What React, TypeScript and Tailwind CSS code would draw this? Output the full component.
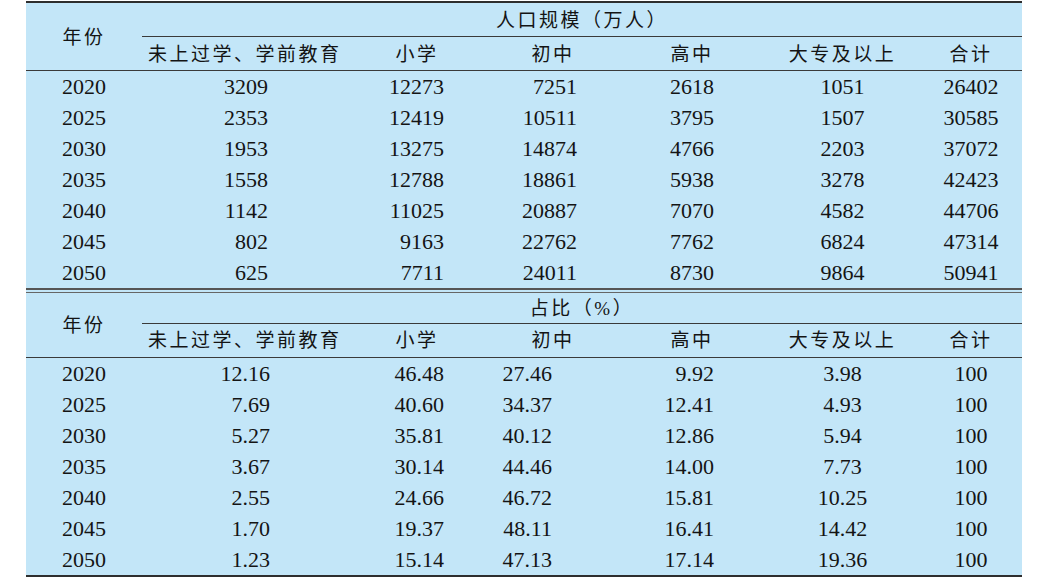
import React from "react";

type Cell = { pr: string; center?: boolean };

const popRows: [string, string[]][] = [
  ["2020", ["3209", "12273", "7251", "2618", "1051", "26402"]],
  ["2025", ["2353", "12419", "10511", "3795", "1507", "30585"]],
  ["2030", ["1953", "13275", "14874", "4766", "2203", "37072"]],
  ["2035", ["1558", "12788", "18861", "5938", "3278", "42423"]],
  ["2040", ["1142", "11025", "20887", "7070", "4582", "44706"]],
  ["2045", ["802", "9163", "22762", "7762", "6824", "47314"]],
  ["2050", ["625", "7711", "24011", "8730", "9864", "50941"]],
];

const shareRows: [string, string[]][] = [
  ["2020", ["12.16", "46.48", "27.46", "9.92", "3.98", "100"]],
  ["2025", ["7.69", "40.60", "34.37", "12.41", "4.93", "100"]],
  ["2030", ["5.27", "35.81", "40.12", "12.86", "5.94", "100"]],
  ["2035", ["3.67", "30.14", "44.46", "14.00", "7.73", "100"]],
  ["2040", ["2.55", "24.66", "46.72", "15.81", "10.25", "100"]],
  ["2045", ["1.70", "19.37", "48.11", "16.41", "14.42", "100"]],
  ["2050", ["1.23", "15.14", "47.13", "17.14", "19.36", "100"]],
];

// column alignment inside each grid column (right padding, LaTeX-style)
const popAlign: Cell[] = [
  { pr: "pr-[92px]" },
  { pr: "pr-[46px]" },
  { pr: "pr-[53px]" },
  { pr: "pr-[46px]" },
  { pr: "pr-0", center: true },
  { pr: "pr-[5px]", center: true },
];
const shareAlign: Cell[] = [
  { pr: "pr-[90px]" },
  { pr: "pr-[46px]" },
  { pr: "pr-[78px]" },
  { pr: "pr-[46px]" },
  { pr: "pr-0", center: true },
  { pr: "pr-[5px]", center: true },
];

const cjk = "font-['Liberation_Serif','Noto_Sans_CJK_SC',serif] text-[19px] tracking-[2.5px]";
const num = "font-['Liberation_Serif',serif] text-[22px]";

function HeaderCells({ pt }: { pt: string }) {
  return (
    <>
      <div className={`flex h-[34px] items-center justify-start border-b border-[#3a3a3a] pl-[6px] ${pt} ${cjk}`}>
        未上过学、学前教育
      </div>
      <div className={`flex h-[34px] items-center justify-center border-b border-[#3a3a3a] pr-[16px] ${pt} ${cjk}`}>小学</div>
      <div className={`flex h-[34px] items-center justify-center border-b border-[#3a3a3a] pr-[14px] ${pt} ${cjk}`}>初中</div>
      <div className={`flex h-[34px] items-center justify-center border-b border-[#3a3a3a] pr-[6px] ${pt} ${cjk}`}>高中</div>
      <div className={`flex h-[34px] items-center justify-center border-b border-[#3a3a3a] ${pt} ${cjk}`}>大专及以上</div>
      <div className={`flex h-[34px] items-center justify-center border-b border-[#3a3a3a] pr-[5px] ${pt} ${cjk}`}>合计</div>
    </>
  );
}

function Section({
  title,
  titleH,
  pt,
  rows,
  align,
}: {
  title: string;
  titleH: string;
  pt: string;
  rows: [string, string[]][];
  align: Cell[];
}) {
  return (
    <div className="grid grid-cols-[116px_218px_130px_140px_130px_165px_97px] text-[#141414]">
      <div className={`row-span-2 flex items-center justify-center border-b border-[#3a3a3a] ${pt} ${cjk}`}>年份</div>
      <div className={`col-span-6 flex ${titleH} items-center justify-center border-b border-[#3a3a3a] ${pt} ${cjk}`}>
        {title}
      </div>
      <HeaderCells pt={pt} />
      {rows.map(([year, vals]) => (
        <React.Fragment key={year}>
          <div className={`flex h-[31px] items-center justify-center ${num}`}>{year}</div>
          {vals.map((v, i) => (
            <div
              key={i}
              className={`flex h-[31px] items-center ${align[i].center ? "justify-center" : "justify-end"} ${align[i].pr} ${num}`}
            >
              {v}
            </div>
          ))}
        </React.Fragment>
      ))}
    </div>
  );
}

export default function App() {
  return (
    <div className="h-[577px] w-[1051px] bg-white pt-px">
      <div className="ml-[26px] w-[996px] bg-[#c3e6f8]">
        <div className="h-[2px] bg-[#2e2e2e]" />
        <Section title="人口规模（万人）" titleH="h-[34px]" pt="pt-[4px]" rows={popRows} align={popAlign} />
        <div className="h-[1.5px] bg-[#555]" />
        <div className="h-[2px]" />
        <div className="h-[1.5px] bg-[#666]" />
        <Section title="占比（%）" titleH="h-[31px]" pt="pt-[2px]" rows={shareRows} align={shareAlign} />
        <div className="h-[2px] bg-[#2e2e2e]" />
      </div>
    </div>
  );
}
